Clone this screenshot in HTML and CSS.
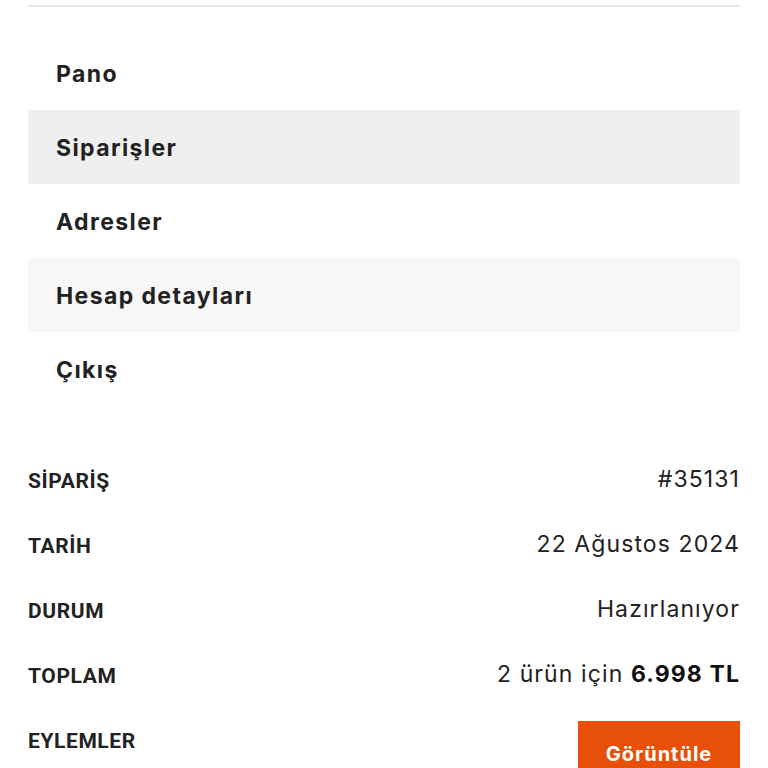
FILE: index.html
```html
<!DOCTYPE html>
<html lang="tr">
<head>
<meta charset="utf-8">
<link rel="stylesheet" href="styles.css">
</head>
<body>
<div class="page">
  <div class="divider"></div>
  <nav class="menu">
    <a class="menu-item">Pano</a>
    <a class="menu-item active">Siparişler</a>
    <a class="menu-item">Adresler</a>
    <a class="menu-item alt">Hesap detayları</a>
    <a class="menu-item">Çıkış</a>
  </nav>
  <div class="order">
    <div class="row"><span class="label">SİPARİŞ</span><span class="value">#35131</span></div>
    <div class="row"><span class="label">TARİH</span><span class="value">22 Ağustos 2024</span></div>
    <div class="row"><span class="label">DURUM</span><span class="value">Hazırlanıyor</span></div>
    <div class="row"><span class="label">TOPLAM</span><span class="value">2 ürün için <b>6.998 TL</b></span></div>
    <div class="row actions"><span class="label">EYLEMLER</span><a class="btn">Görüntüle</a></div>
  </div>
</div>
</body>
</html>
```

FILE: styles.css
```css
html, body {
  margin: 0;
  padding: 0;
  background: #ffffff;
}
.page {
  padding: 0 28px;
  font-family: "Inter", "Noto Sans", sans-serif;
  color: #222222;
  overflow: hidden;
  height: 768px;
}
.divider {
  margin-top: 5px;
  border-top: 2px solid #e6e6e6;
}
.menu {
  display: flex;
  flex-direction: column;
  margin-top: 29px;
}
.menu-item {
  display: flex;
  align-items: center;
  height: 74px;
  padding-left: 28px;
  padding-top: 1px;
  box-sizing: border-box;
  font-size: 23px;
  font-weight: 700;
  letter-spacing: 1.4px;
  color: #222222;
}
.menu-item.active {
  background: #efefef;
}
.menu-item.alt {
  background: #f7f7f7;
}
.order {
  margin-top: 40px;
  display: flex;
  flex-direction: column;
}
.row {
  display: flex;
  justify-content: space-between;
  align-items: center;
  height: 65px;
}
.label {
  font-family: "Roboto", sans-serif;
  font-weight: 700;
  font-size: 21px;
  letter-spacing: 0.6px;
  color: #222222;
  padding-top: 4px;
}
.value {
  font-size: 23px;
  font-weight: 400;
  letter-spacing: 1.1px;
  color: #222222;
}
.value b {
  font-weight: 700;
  color: #111111;
}
.row.actions {
  align-items: flex-start;
  height: auto;
}
.row.actions .label {
  padding-top: 23px;
}
.btn {
  margin-top: 15px;
  width: 162px;
  height: 66px;
  background: #e8500a;
  color: #ffffff;
  font-size: 20px;
  font-weight: 700;
  letter-spacing: 1px;
  display: flex;
  align-items: center;
  justify-content: center;
}
```
